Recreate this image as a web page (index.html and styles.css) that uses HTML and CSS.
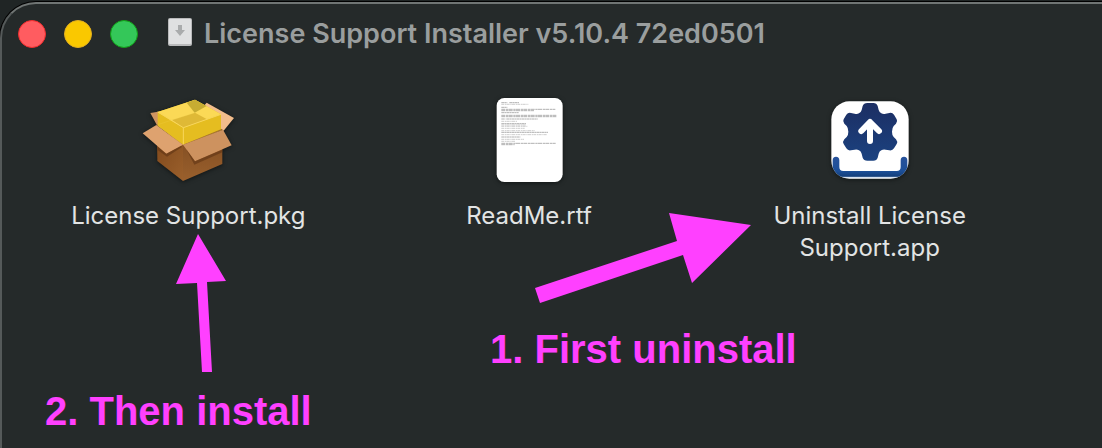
FILE: index.html
```html
<!DOCTYPE html>
<html lang="en">

<head>
    <meta charset="UTF-8">
    <meta name="viewport" content="width=device-width, initial-scale=1.0">
    <title>License Support Installer</title>
    <link rel="stylesheet" href="styles.css">
</head>

<body>
    <main class="window">
        <header class="titlebar">
            <div class="controls">
                <button class="control close" type="button" aria-label="Close"></button>
                <button class="control minimize" type="button" aria-label="Minimize"></button>
                <button class="control zoom" type="button" aria-label="Zoom"></button>
            </div>
            <svg class="disk" viewBox="0 0 24 28" aria-hidden="true">
                <rect x="0" y="0" width="24" height="28" rx="2" fill="#b9babb" />
                <rect x="1" y="1" width="22" height="25" rx="1" fill="#dfe0e1" />
                <path d="M10 7h4v5h3l-5 6-5-6h3z" fill="#a9abac" />
            </svg>
            <h1 class="title">License Support Installer v5.10.4 72ed0501</h1>
        </header>

        <ul class="files">
            <li class="file">
                <!-- open box with a yellow package -->
                <svg class="icon package" viewBox="-5 0 360 300" aria-hidden="true">
                    <defs>
                        <linearGradient id="boxLeft" x1="0" y1="0" x2="1" y2="1">
                            <stop offset="0" stop-color="#80491c" />
                            <stop offset="1" stop-color="#9b602c" />
                        </linearGradient>
                        <linearGradient id="boxRight" x1="0" y1="0" x2="0" y2="1">
                            <stop offset="0" stop-color="#7d4a20" />
                            <stop offset="1" stop-color="#9a602d" />
                        </linearGradient>
                    </defs>
                    <path d="M62 69L85 65 110 60 83 108z" fill="#cf9461" />
                    <path d="M231 38L313 84 282 122 200 72z" fill="#f2bd8c" />
                    <path d="M82 104L196 66 280 120 160 168z" fill="#a67526" />
                    <path d="M82 150L160 166V273L83 213z" fill="url(#boxLeft)" />
                    <path d="M160 164L278 122V222L160 273z" fill="url(#boxRight)" />
                    <path d="M84 66L196 29 274 73V118L160 164 84 108z" fill="#e5bd20" />
                    <path d="M84 66L196 29 274 73 161 113z" fill="#fbd956" />
                    <path d="M127 90L196 68 232 88 161 113z" fill="#dfb936" />
                    <path d="M171 38L196 29 231 48 195 68z" fill="#c7ac32" />
                    <path d="M84 66L161 113V164M161 113L274 73" fill="none" stroke="#f8d65c" stroke-width="3" />
                    <path d="M196 68L84 104" fill="none" stroke="#f6d55b" stroke-width="2" opacity=".3" />
                    <path d="M80 105L160 164 110 191 39 130z" fill="#dea26f" />
                    <path d="M160 164L280 119 306 166 196 214z" fill="#cd925f" />
                    <path d="M84 170L110 191 154 168 158 170 112 200 84 180z" fill="#5f3414" opacity=".6" />
                    <path d="M170 178L196 214 278 179V187L194 224z" fill="#5f3414" opacity=".6" />
                </svg>
                <span class="name">License Support.pkg</span>
            </li>
            <li class="file">
                <!-- text document thumbnail -->
                <svg class="icon document" viewBox="-2 0 300 300" aria-hidden="true">
                    <rect x="51" y="24" width="198" height="252" rx="23" fill="#fff" />
                    <g fill="none" stroke="#8a8a8a" stroke-width="2">
                        <path d="M65 38h18m6 0h30M65 52h18M65 68h52M65 87h12m3 0h94M65 101h75M65 127h140M65 141h57" stroke-dasharray="8 1 5 1" />
                        <path d="M65 76h165M65 80h165M65 58h162M65 62h98M65 160h163M65 164h40" stroke-dasharray="12 2 7 1" />
                    </g>
                    <g fill="none" stroke="#b4b4b4" stroke-width="2" stroke-dasharray="9 2 4 1">
                        <path d="M65 43h81M65 94h48M65 105h74M65 109h78M65 115h70M65 122h100M65 134h136M65 148h68M65 154h42" />
                    </g>
                </svg>
                <span class="name">ReadMe.rtf</span>
            </li>
            <li class="file">
                <!-- gear with an arrow over a tray -->
                <svg class="icon app" viewBox="0 0 300 300" aria-hidden="true">
                    <defs>
                        <linearGradient id="gear" x1="0" y1="0" x2="0" y2="1">
                            <stop offset="0" stop-color="#1c2e63" />
                            <stop offset="1" stop-color="#1b4280" />
                        </linearGradient>
                        <linearGradient id="tray" x1="0" y1="0" x2="0" y2="1">
                            <stop offset="0" stop-color="#27529b" />
                            <stop offset=".7" stop-color="#1c4f98" />
                            <stop offset="1" stop-color="#123c76" />
                        </linearGradient>
                        <clipPath id="tile">
                            <rect x="34" y="34" width="232" height="232" rx="54" />
                        </clipPath>
                    </defs>
                    <rect x="34" y="34" width="232" height="232" rx="54" fill="#fff" />
                    <g clip-path="url(#tile)">
                        <path d="M38 211q0-11 10-11t10 11v20q0 12 12 12h160q12 0 12-12v-20q0-11 10-11t10 11v51H38z" fill="url(#tray)" />
                        <path d="M60 262h180" fill="none" stroke="#dce8f7" stroke-width="3" />
                    </g>
                    <path d="M128 48Q131 39 142 39H160Q170 39 173 48L176 60Q178 67 184 70Q190 73 197 71L208 69Q217 67 222 74L230 88Q234 95 228 101L221 108Q216 114 216 125Q216 136 221 141L228 148Q234 155 230 162L222 175Q217 183 208 181L197 179Q190 177 184 181Q178 184 176 191L173 203Q170 212 160 212H142Q131 212 128 203L125 191Q123 184 117 181Q111 177 104 179L93 181Q84 183 79 175L71 162Q67 155 73 148L80 141Q85 136 85 125Q85 114 80 108L73 101Q67 95 71 88L79 74Q84 67 93 69L104 71Q111 73 117 70Q123 67 125 60z" fill="url(#gear)" />
                    <path d="M150 153V98M124 123L150 96 177 123" fill="none" stroke="#fff" stroke-width="18" stroke-linecap="round" stroke-linejoin="round" />
                </svg>
                <span class="name">Uninstall License Support.app</span>
            </li>
        </ul>

        <!-- notes drawn over the window -->
        <svg class="arrow arrow-install" viewBox="0 0 50 140" aria-hidden="true">
            <path d="M22 1L50 48 31 49 36 139 26 139 21 50 0 51z" />
        </svg>
        <p class="note note-install">2. Then install</p>
        <svg class="arrow arrow-uninstall" viewBox="0 0 216 92" aria-hidden="true">
            <path d="M216 13L134 1 142 29 0 76 5 91 148 43 157 71z" />
        </svg>
        <p class="note note-uninstall">1. First uninstall</p>
    </main>
</body>

</html>
```

FILE: styles.css
```css
* {
    box-sizing: border-box;
}

body {
    margin: 0;
    padding-top: 2px;
    background-color: #202525;
    font-family: Inter, "Liberation Sans", sans-serif;
    overflow: hidden;
}

.window {
    position: relative;
    min-height: 100vh;
    border: 2px solid #707574;
    border-left-color: #555a5a;
    border-right: 0;
    border-bottom: 0;
    border-top-left-radius: 36px;
    background-color: #252a2a;
    box-shadow: 0 0 0 1px #000;
}

.titlebar {
    display: flex;
    align-items: center;
    height: 60px;
    padding-left: 16px;
}

.controls {
    display: flex;
    gap: 18px;
    margin-right: 30px;
}

.control {
    width: 28px;
    height: 28px;
    padding: 0;
    border: 1px solid;
    border-radius: 50%;
}

.close {
    background-color: #ff5c60;
    border-color: #f32d2d;
}

.minimize {
    background-color: #fac800;
    border-color: #e2ae20;
}

.zoom {
    background-color: #34c759;
    border-color: #119f16;
}

.disk {
    width: 24px;
    height: 28px;
    margin-bottom: 4px;
}

.title {
    margin: 0 0 0 12px;
    color: #9a9e9e;
    font-size: 27px;
    font-weight: 600;
    line-height: 32px;
    white-space: nowrap;
}

.files {
    display: grid;
    grid-template-columns: repeat(3, 1fr);
    margin: 0;
    padding: 26px 62px 0 16px;
    list-style: none;
}

.file {
    display: flex;
    flex-direction: column;
    align-items: center;
}

.icon {
    height: 100px;
    filter: drop-shadow(0 1px 2px #111515);
}

.package {
    width: 120px;
}

.document,
.app {
    width: 100px;
}

.name {
    max-width: 240px;
    margin-top: 10px;
    color: #e2e4e4;
    font-size: 24px;
    line-height: 32px;
    text-align: center;
}

.arrow {
    position: absolute;
    fill: #ff40ff;
}

.arrow-install {
    top: 229px;
    left: 174px;
    width: 50px;
    height: 140px;
}

.arrow-uninstall {
    top: 208px;
    left: 533px;
    width: 216px;
    height: 92px;
}

.note {
    position: absolute;
    margin: 0;
    color: #ff40ff;
    font-family: "Liberation Sans", Arial, sans-serif;
    font-size: 40px;
    font-weight: 700;
    line-height: 46px;
    white-space: nowrap;
}

.note-install {
    top: 384px;
    left: 43px;
}

.note-uninstall {
    top: 322px;
    left: 488px;
}
```
